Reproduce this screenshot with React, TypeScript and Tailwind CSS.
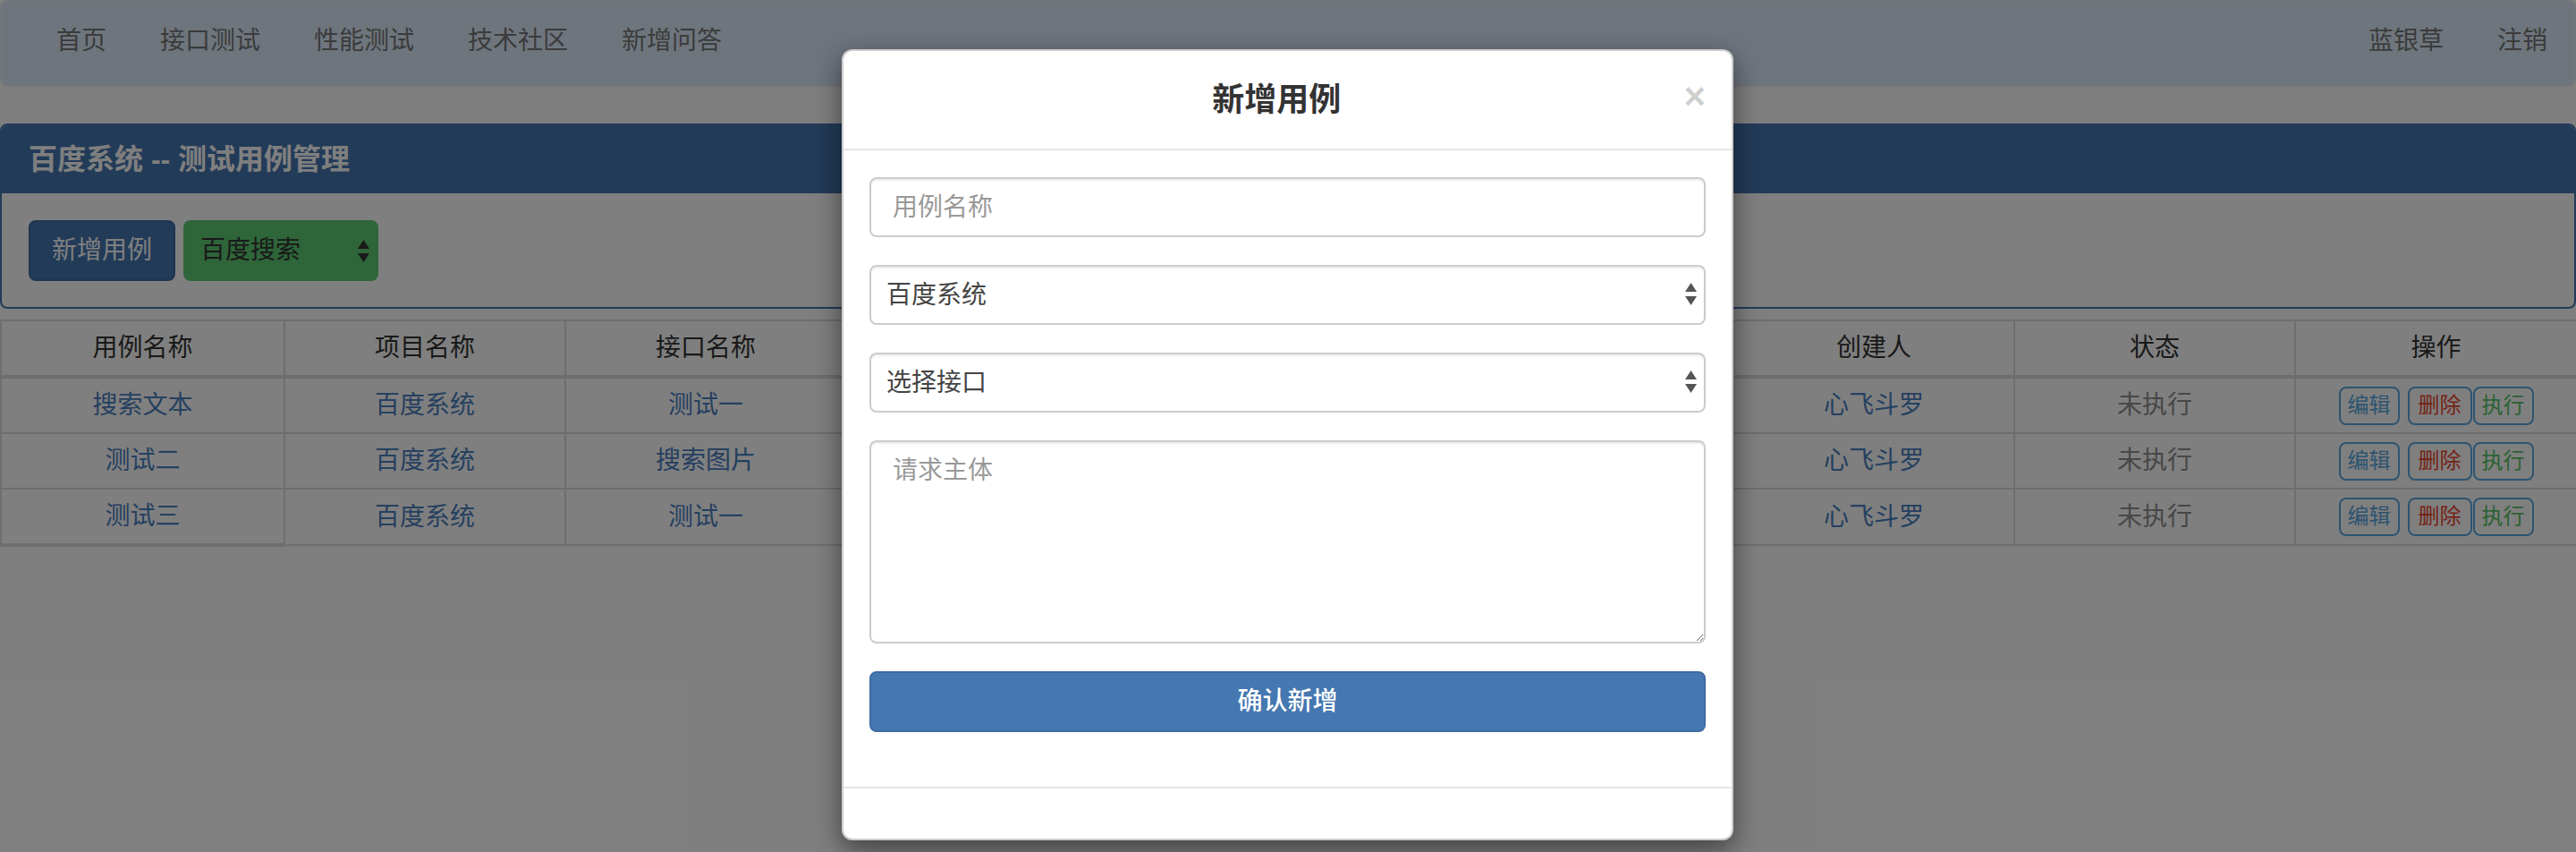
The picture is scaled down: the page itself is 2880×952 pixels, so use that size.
import React from "react";

const FONT = "[font-family:'Liberation_Sans','Noto_Sans_CJK_SC',sans-serif]";

function Arrows({ color }: { color: string }) {
  return (
    <svg width="13" height="25" viewBox="0 0 13 25">
      <polygon points="6.5,0 13,10 0,10" fill={color} />
      <polygon points="0,15 13,15 6.5,25" fill={color} />
    </svg>
  );
}

const rows = [
  { name: "搜索文本", proj: "百度系统", api: "测试一", method: "GET", url: "/s", time: "2019-06-01" },
  { name: "测试二", proj: "百度系统", api: "搜索图片", method: "GET", url: "/img", time: "2019-06-02" },
  { name: "测试三", proj: "百度系统", api: "测试一", method: "POST", url: "/s", time: "2019-06-03" },
];

const headers = ["用例名称", "项目名称", "接口名称", "请求方法", "请求地址", "创建时间", "创建人", "状态", "操作"];
const colW = ["w-[317px]", "w-[314px]", "w-[314px]", "w-[331px]", "w-[331px]", "w-[330px]", "w-[314px]", "w-[314px]", "w-[315px]"];

export default function App() {
  const td = "border-2 border-[#ddd] px-[10px] py-[10px] text-center leading-[40px] text-[28px]";
  return (
    <div className={`relative w-[2880px] h-[952px] overflow-hidden bg-white ${FONT}`}>
      {/* Navbar */}
      <nav className="h-[97px] mb-[41px] bg-[#dceafa] border-2 border-[#e7eef5] rounded-[8px] flex items-center justify-between pl-[31px]">
        <ul className="flex items-center">
          {["首页", "接口测试", "性能测试", "技术社区", "新增问答"].map((t) => (
            <li key={t} className="px-[30px] text-[28px] leading-[40px] text-[#777] pb-[6px]">{t}</li>
          ))}
        </ul>
        <ul className="flex items-center">
          {["蓝银草", "注销"].map((t) => (
            <li key={t} className="px-[30px] text-[28px] leading-[40px] text-[#777] pb-[6px]">{t}</li>
          ))}
        </ul>
      </nav>

      {/* Panel */}
      <div className="mb-[12px] border-2 border-[#4577b0] rounded-[8px] overflow-hidden">
        <div className="h-[76px] bg-[#4577b0] px-[30px] flex items-center text-white text-[32px] font-bold">
          百度系统 -- 测试用例管理
        </div>
        <div className="pt-[30px] pb-[29px] px-[30px] flex gap-[9px]">
          <button className="h-[68px] px-[24px] bg-[#4577b0] border-2 border-[#3d6aa1] rounded-[8px] text-white text-[28px] leading-[40px]">
            新增用例
          </button>
          <div className="relative w-[218px] h-[68px] bg-[#5ccb73] rounded-[8px] flex items-center pl-[19px] text-[28px] text-[#333]">
            百度搜索
            <span className="absolute right-[10px] top-[22px]"><Arrows color="#333" /></span>
          </div>
        </div>
      </div>

      {/* Table */}
      <table className="w-full border-collapse table-fixed">
        <colgroup>
          {colW.map((w, i) => <col key={i} className={w} />)}
        </colgroup>
        <thead>
          <tr>
            {headers.map((h) => (
              <th key={h} className={`${td} border-b-4 font-normal text-[#333]`}>{h}</th>
            ))}
          </tr>
        </thead>
        <tbody>
          {rows.map((r, i) => (
            <tr key={i}>
              <td className={`${td} text-[#4a80c0] ${i === rows.length - 1 ? "border-b-4" : ""}`}>{r.name}</td>
              <td className={`${td} text-[#4a80c0]`}>{r.proj}</td>
              <td className={`${td} text-[#4a80c0]`}>{r.api}</td>
              <td className={`${td} text-[#333]`}>{r.method}</td>
              <td className={`${td} text-[#333]`}>{r.url}</td>
              <td className={`${td} text-[#333]`}>{r.time}</td>
              <td className={`${td} text-[#4a80c0]`}>心飞斗罗</td>
              <td className={`${td} text-[#8f8f8f]`}>未执行</td>
              <td className={`${td}`}>
                <div className="h-[40px] flex justify-center items-center">
                  <span className="h-[43px] px-[8px] border-2 border-[#5aa8e0] rounded-[8px] text-[24px] leading-[38px] text-[#5aa8e0]">编辑</span>
                  <span className="ml-[9px] h-[43px] px-[10px] border-2 border-[#5aa8e0] rounded-[8px] text-[24px] leading-[38px] text-[#e8452c]">删除</span>
                  <span className="ml-[1px] h-[43px] px-[8px] border-2 border-[#5aa8e0] rounded-[8px] text-[24px] leading-[38px] text-[#56c466]">执行</span>
                </div>
              </td>
            </tr>
          ))}
        </tbody>
      </table>

      {/* Backdrop */}
      <div className="absolute inset-0 bg-black/50" />

      {/* Modal */}
      <div className="absolute left-[941px] top-[55px] w-[997px] bg-white border-2 border-black/20 rounded-[12px] shadow-[0_10px_30px_rgba(0,0,0,0.5)]">
        <div className="h-[111px] flex items-center px-[29px] border-b-2 border-[#e5e5e5]">
          <h4 className="flex-1 text-center text-[36px] leading-[51px] font-bold text-[#333]">新增用例</h4>
          <span className="relative -top-[4px] text-[42px] leading-[42px] font-bold text-black/20">×</span>
        </div>
        <div className="pt-[30px] pb-[61px] px-[29px] flex flex-col gap-[31px]">
          <input
            placeholder="用例名称"
            className="h-[67px] border-2 border-[#ccc] rounded-[8px] px-[24px] text-[28px] text-[#555] placeholder:text-[#999] shadow-[inset_0_2px_2px_rgba(0,0,0,0.075)] outline-none"
          />
          <div className="relative h-[67px] border-2 border-[#ccc] rounded-[8px] flex items-center pl-[17px] text-[28px] text-[#444] shadow-[inset_0_2px_2px_rgba(0,0,0,0.075)]">
            百度系统
            <span className="absolute right-[8px] top-[18px]"><Arrows color="#555" /></span>
          </div>
          <div className="relative h-[67px] border-2 border-[#ccc] rounded-[8px] flex items-center pl-[17px] text-[28px] text-[#444] shadow-[inset_0_2px_2px_rgba(0,0,0,0.075)]">
            选择接口
            <span className="absolute right-[8px] top-[18px]"><Arrows color="#555" /></span>
          </div>
          <textarea
            placeholder="请求主体"
            className="h-[227px] border-2 border-[#ccc] rounded-[8px] px-[24px] py-[12px] text-[28px] leading-[40px] text-[#555] placeholder:text-[#999] shadow-[inset_0_2px_2px_rgba(0,0,0,0.075)] outline-none"
          />
          <button className="h-[68px] bg-[#4577b0] border-2 border-[#3e6ca3] rounded-[8px] text-white text-[28px] leading-[40px] font-medium">
            确认新增
          </button>
        </div>
        <div className="h-[58px] border-t-2 border-[#e5e5e5]" />
      </div>
    </div>
  );
}
